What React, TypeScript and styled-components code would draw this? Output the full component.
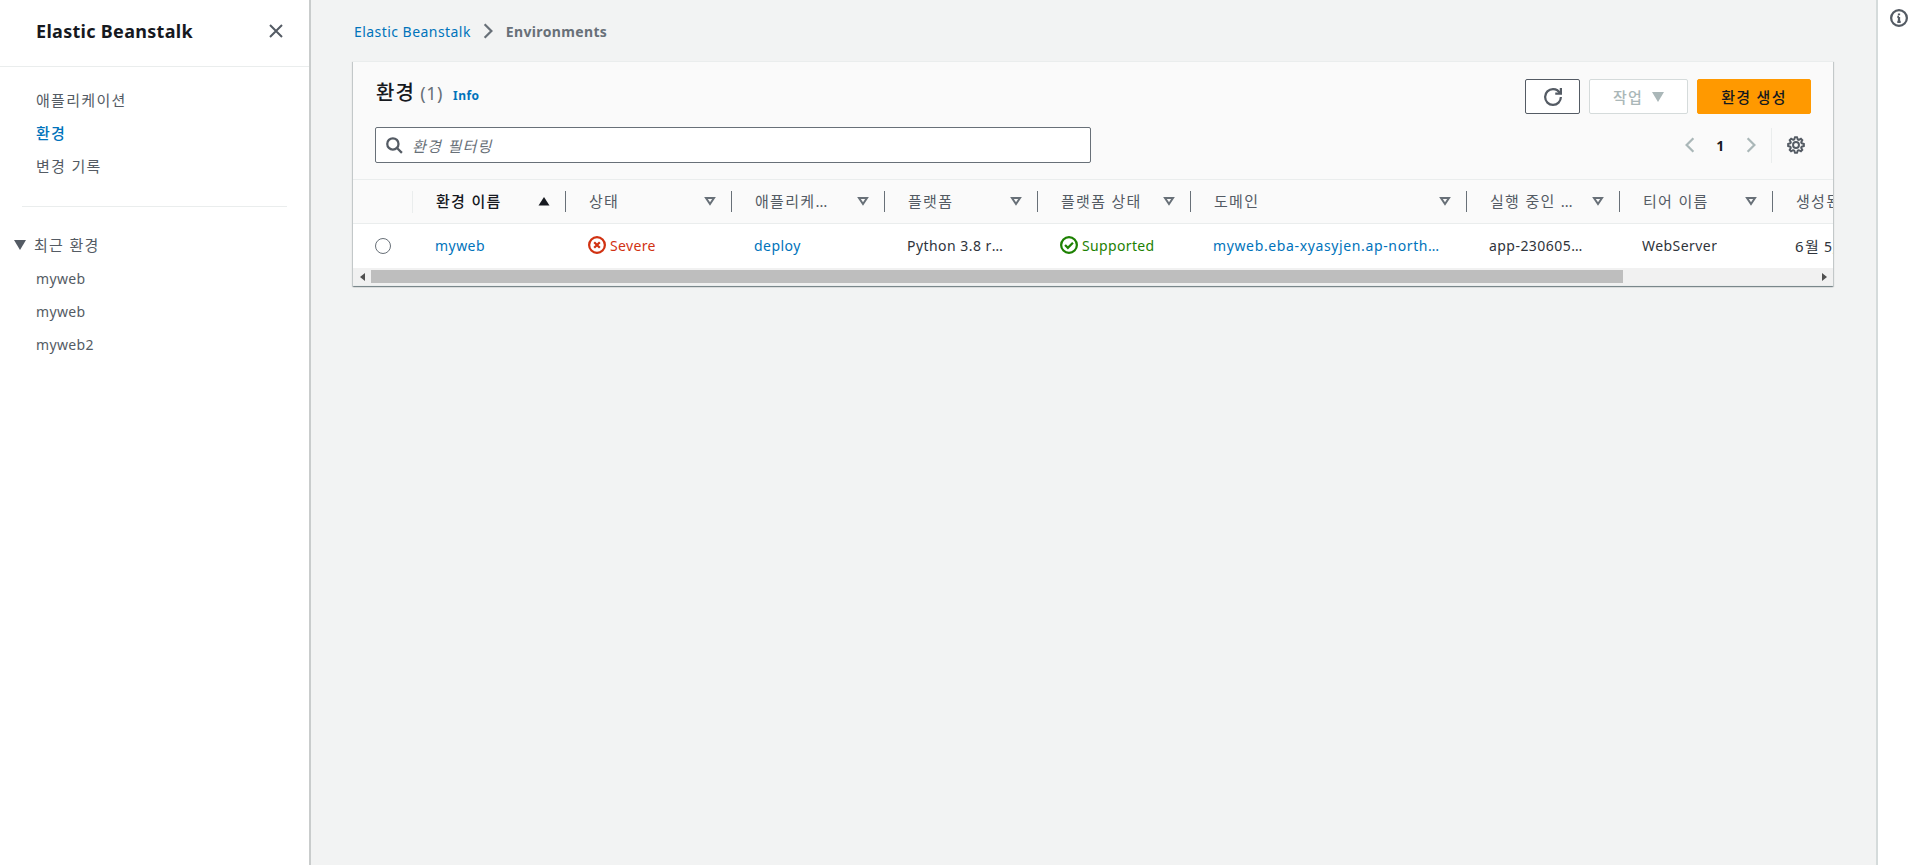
import styled, { createGlobalStyle, css } from "styled-components";

const GlobalStyle = createGlobalStyle`
  html, body {
    margin: 0;
    height: 100%;
    overflow: hidden;
  }
  body {
    font-family: "Noto Sans", "Noto Sans CJK KR", sans-serif;
    font-size: 14px;
    letter-spacing: 0.35px;
    color: #16191f;
  }
  * {
    box-sizing: border-box;
  }
`;

// hangul in the reference runs wider than the latin text next to it
const hangul = css`
  font-size: 15px;
  letter-spacing: 1.3px;
`;

type Column = {
  label: string;
  width: number;
  sorted?: boolean;
};

const columns: Column[] = [
  { label: "환경 이름", width: 153, sorted: true },
  { label: "상태", width: 166 },
  { label: "애플리케이션 이름", width: 153 },
  { label: "플랫폼", width: 153 },
  { label: "플랫폼 상태", width: 153 },
  { label: "도메인", width: 276 },
  { label: "실행 중인 버전", width: 153 },
  { label: "티어 이름", width: 153 },
  { label: "생성된 날짜", width: 153 },
];

const navItems = ["애플리케이션", "환경", "변경 기록"];
const recentItems = ["myweb", "myweb", "myweb2"];

const CaretOutline = () => (
  <SortIcon viewBox="0 0 16 16" fill="none" stroke="#687078" strokeWidth="2">
    <path d="M4 5h8l-4 6-4-6z" />
  </SortIcon>
);

const CaretUp = () => (
  <SortIcon viewBox="0 0 16 16" fill="#16191f">
    <path d="M2.5 12.5h11L8 4z" />
  </SortIcon>
);

export default function App() {
  return (
    <>
      <GlobalStyle />
      <Page>
        <Sidebar>
          <SidebarHeader>
            <SidebarTitle>Elastic Beanstalk</SidebarTitle>
            <svg width="16" height="16" viewBox="0 0 16 16" fill="none" stroke="#545b64" strokeWidth="2">
              <path d="M2 2l12 12M14 2L2 14" />
            </svg>
          </SidebarHeader>
          <NavList>
            {navItems.map((item) => (
              <NavItem key={item} ko active={item === "환경"}>
                {item}
              </NavItem>
            ))}
          </NavList>
          <SidebarDivider />
          <SectionTitle>
            <svg width="12" height="10" viewBox="0 0 12 10" fill="#545b64">
              <path d="M0 0h12L6 10z" />
            </svg>
            최근 환경
          </SectionTitle>
          <NavList>
            {recentItems.map((item, i) => (
              <NavItem key={i}>{item}</NavItem>
            ))}
          </NavList>
        </Sidebar>

        <Main>
          <Breadcrumbs>
            <CrumbLink>Elastic Beanstalk</CrumbLink>
            <svg width="18" height="18" viewBox="0 0 16 16" fill="none" stroke="#687078" strokeWidth="2">
              <path d="M5 2l6 6-6 6" />
            </svg>
            <CrumbCurrent>Environments</CrumbCurrent>
          </Breadcrumbs>

          <Card>
            <CardHeader>
              <HeaderTop>
                <TitleRow>
                  <Title>환경</Title>
                  <Count>(1)</Count>
                  <InfoLink>Info</InfoLink>
                </TitleRow>
                <Actions>
                  <RefreshButton>
                    <svg width="18" height="18" viewBox="0 0 16 16" fill="none" stroke="#545b64" strokeWidth="2">
                      <path d="M10 5h5V0" />
                      <path d="M15 8a6.957 6.957 0 0 1-7 7 6.957 6.957 0 0 1-7-7 6.957 6.957 0 0 1 7-7 6.87 6.87 0 0 1 6.3 4" />
                    </svg>
                  </RefreshButton>
                  <DisabledButton>
                    작업
                    <svg width="12" height="10" viewBox="0 0 12 10" fill="#aab7b8">
                      <path d="M0 0h12L6 10z" />
                    </svg>
                  </DisabledButton>
                  <PrimaryButton>환경 생성</PrimaryButton>
                </Actions>
              </HeaderTop>
              <HeaderBottom>
                <SearchBox>
                  <svg width="18" height="18" viewBox="0 0 16 16" fill="none" stroke="#545b64" strokeWidth="2">
                    <circle cx="7" cy="7" r="5" />
                    <path d="M15 15l-4.5-4.5" />
                  </svg>
                  <Placeholder>환경 필터링</Placeholder>
                </SearchBox>
                <Pagination>
                  <svg width="18" height="18" viewBox="0 0 16 16" fill="none" stroke="#aab7b8" strokeWidth="2">
                    <path d="M11 2L5 8l6 6" />
                  </svg>
                  <PageNumber>1</PageNumber>
                  <svg width="18" height="18" viewBox="0 0 16 16" fill="none" stroke="#aab7b8" strokeWidth="2">
                    <path d="M5 2l6 6-6 6" />
                  </svg>
                  <PagerDivider />
                  <svg width="18" height="18" viewBox="0 0 16 16" fill="none" stroke="#545b64" strokeWidth="2">
                    <path d="M13.3 5.2l1.1-2.1L13 1.7l-2.1 1.1c-.3-.2-.7-.3-1.1-.4L9 0H7l-.8 2.3c-.3.1-.7.2-1 .4L3.1 1.6 1.6 3.1l1.1 2.1c-.2.3-.3.7-.4 1L0 7v2l2.3.8c.1.4.3.7.4 1.1l-1.1 2.1 1.4 1.4 2.1-1.1c.3.2.7.3 1.1.4L7 16h2l.8-2.3c.4-.1.7-.3 1.1-.4l2.1 1.1 1.4-1.4-1.1-2.1c.2-.3.3-.7.4-1.1L16 9V7l-2.3-.8c-.1-.3-.2-.7-.4-1zM8 11c-1.7 0-3-1.3-3-3s1.3-3 3-3 3 1.3 3 3-1.3 3-3 3z" transform="translate(1 1) scale(.875)" />
                  </svg>
                </Pagination>
              </HeaderBottom>
            </CardHeader>

            <TableClip>
              <HeadRow>
                <SelectHead />
                {columns.map((col) => (
                  <HeadCell key={col.label} width={col.width}>
                    <HeadLabel sorted={col.sorted}>{col.label}</HeadLabel>
                    {col.sorted ? <CaretUp /> : <CaretOutline />}
                  </HeadCell>
                ))}
              </HeadRow>
              <BodyRow>
                <SelectCell>
                  <Radio />
                </SelectCell>
                <BodyCell width={153}>
                  <TableLink>myweb</TableLink>
                </BodyCell>
                <BodyCell width={166}>
                  <Status color="#d13212">
                    <svg width="18" height="18" viewBox="0 0 16 16" fill="none" stroke="#d13212" strokeWidth="2">
                      <circle cx="8" cy="8" r="7" />
                      <path d="M5.5 5.5l5 5M10.5 5.5l-5 5" />
                    </svg>
                    Severe
                  </Status>
                </BodyCell>
                <BodyCell width={153}>
                  <TableLink>deploy</TableLink>
                </BodyCell>
                <BodyCell width={153}>
                  <CellText>Python 3.8 running on 64bit Amazon Linux 2</CellText>
                </BodyCell>
                <BodyCell width={153}>
                  <Status color="#1d8102">
                    <svg width="18" height="18" viewBox="0 0 16 16" fill="none" stroke="#1d8102" strokeWidth="2">
                      <circle cx="8" cy="8" r="7" />
                      <path d="M4.5 8l2.5 2.5 4.5-4.5" />
                    </svg>
                    Supported
                  </Status>
                </BodyCell>
                <BodyCell width={276} paddingRight={26}>
                  <DomainLink>myweb.eba-xyasyjen.ap-northeast-2.elasticbeanstalk.com</DomainLink>
                </BodyCell>
                <BodyCell width={153} paddingRight={35}>
                  <CellText>app-230605_152408</CellText>
                </BodyCell>
                <BodyCell width={153}>
                  <CellText>WebServer</CellText>
                </BodyCell>
                <BodyCell width={153}>
                  <CellText>
                    <HangulRun>6월</HangulRun> 5, 2023
                  </CellText>
                </BodyCell>
              </BodyRow>
            </TableClip>

            <ScrollTrack>
              <ScrollArrow>
                <svg width="5" height="8" viewBox="0 0 5 8" fill="#505050">
                  <path d="M5 0v8L0 4z" />
                </svg>
              </ScrollArrow>
              <ScrollThumb />
              <ScrollArrow>
                <svg width="5" height="8" viewBox="0 0 5 8" fill="#505050">
                  <path d="M0 0v8l5-4z" />
                </svg>
              </ScrollArrow>
            </ScrollTrack>
          </Card>
        </Main>

        <RightRail>
          <svg width="18" height="18" viewBox="0 0 16 16" fill="none" stroke="#545b64" strokeWidth="2">
            <circle cx="8" cy="8" r="7" />
            <path d="M8 7v4.5M6.5 11.5h3M6.5 7H8M8 4v1.6" />
          </svg>
        </RightRail>
      </Page>
    </>
  );
}

const Page = styled.div`
  display: flex;
  height: 865px;
  width: 1920px;
  overflow: hidden;
`;

const Sidebar = styled.aside`
  flex: 0 0 311px;
  background: #fff;
  border-right: 2px solid #c9cccc;
`;

const SidebarHeader = styled.div`
  display: flex;
  align-items: center;
  justify-content: space-between;
  height: 67px;
  padding: 0 25px 4px 36px;
  border-bottom: 1px solid #eaeded;
`;

const SidebarTitle = styled.div`
  font-size: 18px;
  font-weight: 700;
  line-height: 22px;
  letter-spacing: 0.3px;
`;

const NavList = styled.div`
  display: flex;
  flex-direction: column;
  gap: 11px;
  padding: 0 36px;
  margin-top: 22px;
`;

const NavItem = styled.div<{ active?: boolean; ko?: boolean }>`
  font-size: 14px;
  line-height: 22px;
  color: ${({ active }) => (active ? "#0073bb" : "#545b64")};
  font-weight: ${({ active }) => (active ? 500 : 400)};
  ${({ ko }) => ko && hangul}
`;

const SidebarDivider = styled.div`
  height: 1px;
  margin: 29px 22px 0 22px;
  background: #eaeded;
`;

const SectionTitle = styled.div`
  ${hangul}
  display: flex;
  align-items: center;
  gap: 8px;
  margin: 27px 0 -10px 14px;
  line-height: 22px;
  color: #545b64;
`;

const Main = styled.main`
  flex: 1;
  min-width: 0;
  padding: 20px 43px 0 42px;
  background: #f2f3f3;
`;

const Breadcrumbs = styled.nav`
  display: flex;
  align-items: center;
  gap: 8px;
  height: 22px;
  margin-bottom: 19px;
  font-size: 14px;
`;

const CrumbLink = styled.a`
  margin-left: 1px;
  letter-spacing: 0.45px;
  color: #0073bb;
`;

const CrumbCurrent = styled.span`
  margin-left: 1px;
  color: #687078;
  font-weight: 700;
`;

const Card = styled.section`
  background: #fff;
  box-shadow: 0 1px 1px 0 rgba(0, 28, 36, 0.3), 1px 1px 1px 0 rgba(0, 28, 36, 0.15),
    -1px 1px 1px 0 rgba(0, 28, 36, 0.15);
  border-top: 1px solid #eaeded;
  overflow: hidden;
`;

const CardHeader = styled.div`
  height: 118px;
  padding: 16px 22px 0 22px;
  background: #fafafa;
  border-bottom: 1px solid #eaeded;
`;

const HeaderTop = styled.div`
  display: flex;
  align-items: flex-start;
  justify-content: space-between;
`;

const TitleRow = styled.div`
  display: flex;
  align-items: baseline;
  gap: 5px;
  margin-left: 1px;
`;

const Title = styled.h1`
  margin: 0;
  font-size: 20px;
  font-weight: 500;
  letter-spacing: 1.2px;
  line-height: 30px;
`;

const Count = styled.span`
  font-size: 18px;
  letter-spacing: 0.6px;
  color: #687078;
`;

const InfoLink = styled.a`
  margin-left: 5px;
  font-size: 12px;
  font-weight: 700;
  letter-spacing: 0.4px;
  color: #0073bb;
`;

const Actions = styled.div`
  display: flex;
  gap: 9px;
  margin-top: 1px;
`;

const BaseButton = styled.button`
  ${hangul}
  display: flex;
  align-items: center;
  justify-content: center;
  height: 35px;
  border-radius: 2px;
  font-family: inherit;
  font-weight: 500;
`;

const RefreshButton = styled(BaseButton)`
  width: 55px;
  background: #fff;
  border: 1px solid #545b64;
`;

const DisabledButton = styled(BaseButton)`
  gap: 9px;
  width: 99px;
  background: #fff;
  border: 1px solid #d5dbdb;
  color: #aab7b8;
`;

const PrimaryButton = styled(BaseButton)`
  width: 114px;
  background: #ff9900;
  border: 1px solid #ff9900;
  color: #16191f;
`;

const HeaderBottom = styled.div`
  display: flex;
  align-items: center;
  justify-content: space-between;
  margin-top: 13px;
`;

const SearchBox = styled.div`
  display: flex;
  align-items: center;
  gap: 9px;
  width: 716px;
  height: 36px;
  padding: 0 9px;
  background: #fff;
  border: 1px solid #687078;
  border-radius: 2px;
`;

const Placeholder = styled.span`
  ${hangul}
  font-style: italic;
  color: #687078;
`;

const Pagination = styled.div`
  display: flex;
  align-items: center;
  padding-right: 6px;
`;

const PageNumber = styled.span`
  width: 43px;
  text-align: center;
  font-size: 14px;
  font-weight: 700;
`;

const PagerDivider = styled.div`
  width: 1px;
  height: 35px;
  margin: 0 15px 0 11px;
  background: #eaeded;
`;

const TableClip = styled.div`
  overflow: hidden;
`;

const HeadRow = styled.div`
  display: flex;
  height: 44px;
  background: #fafafa;
  border-bottom: 1px solid #eaeded;
`;

const SelectHead = styled.div`
  position: relative;
  flex: 0 0 60px;
  &::after {
    content: "";
    position: absolute;
    right: 0;
    top: 11px;
    height: 22px;
    width: 1px;
    background: #eaeded;
  }
`;

const HeadCell = styled.div<{ width: number }>`
  position: relative;
  display: flex;
  flex: 0 0 ${({ width }) => width}px;
  min-width: 0;
  align-items: center;
  justify-content: space-between;
  padding: 0 14px 2px 23px;
  &::after {
    content: "";
    position: absolute;
    right: 0;
    top: 11px;
    height: 21px;
    width: 1px;
    background: #687078;
  }
`;

const HeadLabel = styled.span<{ sorted?: boolean }>`
  ${hangul}
  overflow: hidden;
  white-space: nowrap;
  text-overflow: ellipsis;
  font-weight: ${({ sorted }) => (sorted ? 500 : 400)};
  color: ${({ sorted }) => (sorted ? "#16191f" : "#545b64")};
`;

const SortIcon = styled.svg`
  flex: none;
  width: 16px;
  height: 16px;
  margin-left: 14px;
`;

const BodyRow = styled.div`
  display: flex;
  height: 44px;
  background: #fff;
`;

const SelectCell = styled.div`
  display: flex;
  flex: 0 0 60px;
  align-items: center;
  padding-left: 22px;
`;

const Radio = styled.div`
  width: 16px;
  height: 16px;
  border: 1px solid #687078;
  border-radius: 50%;
  background: #fff;
`;

const BodyCell = styled.div<{ width: number; paddingRight?: number }>`
  display: flex;
  flex: 0 0 ${({ width }) => width}px;
  align-items: center;
  min-width: 0;
  padding: 0 ${({ paddingRight = 27 }) => paddingRight}px 2px 22px;
`;

const CellText = styled.span`
  overflow: hidden;
  white-space: nowrap;
  text-overflow: ellipsis;
  letter-spacing: 0.45px;
  color: #2f343b;
`;

const HangulRun = styled.span`
  ${hangul}
`;

const TableLink = styled.a`
  overflow: hidden;
  white-space: nowrap;
  text-overflow: ellipsis;
  letter-spacing: 0.45px;
  color: #0073bb;
`;

const DomainLink = styled(TableLink)`
  letter-spacing: 0.63px;
`;

const Status = styled.span<{ color: string }>`
  display: flex;
  align-items: center;
  gap: 4px;
  white-space: nowrap;
  color: ${({ color }) => color};
`;

const ScrollTrack = styled.div`
  display: flex;
  height: 18px;
  background: #f1f1f1;
  border-bottom: 1px solid #eaeded;
`;

const ScrollArrow = styled.div`
  display: flex;
  flex: 0 0 18px;
  align-items: center;
  justify-content: center;
`;

const ScrollThumb = styled.div`
  width: 1252px;
  margin: 2px auto 2px 0;
  background: #bebebe;
`;

const RightRail = styled.aside`
  display: flex;
  flex: 0 0 44px;
  justify-content: center;
  padding-top: 9px;
  background: #fff;
  border-left: 2px solid #d5dbdb;
`;
